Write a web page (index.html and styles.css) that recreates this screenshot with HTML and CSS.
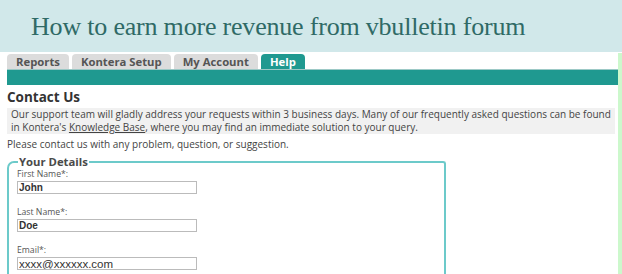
FILE: index.html
```html
<!DOCTYPE html>
<html lang="en">
<head>
    <meta charset="UTF-8">
    <title>How to earn more revenue from vbulletin forum</title>
    <link rel="stylesheet" href="styles.css">
</head>
<body>
    <div class="banner">
        <h1>How to earn more revenue from vbulletin forum</h1>
    </div>
    <div class="page">
        <div class="content">
            <div class="tabs">
                <span class="tab">Reports</span>
                <span class="tab">Kontera Setup</span>
                <span class="tab">My Account</span>
                <span class="tab active">Help</span>
            </div>
            <div class="tab-bar"></div>

            <h2>Contact Us</h2>
            <div class="notice">
                Our support team will gladly address your requests within 3 business days. Many of our frequently asked questions can be found<br>
                in Kontera's <a href="#">Knowledge Base</a>, where you may find an immediate solution to your query.
            </div>
            <p class="intro">Please contact us with any problem, question, or suggestion.</p>

            <fieldset class="details">
                <legend>Your Details</legend>
                <label>First Name*:</label>
                <input type="text" class="bold" value="John">
                <label>Last Name*:</label>
                <input type="text" class="bold" value="Doe">
                <label>Email*:</label>
                <input type="text" value="xxxx@xxxxxx.com">
            </fieldset>
        </div>
        <div class="side"></div>
    </div>
</body>
</html>
```

FILE: styles.css
```css
body {
    margin: 0;
    background-color: #fff;
    font-family: "Open Sans", Arial, sans-serif;
    color: #444;
    overflow: hidden;
}

.banner {
    height: 52px;
    background-color: #d1e8ea;
    margin-bottom: 1px;
}

h1 {
    margin: 0;
    padding: 12px 0 0 31px;
    font-family: "Liberation Serif", "Times New Roman", serif;
    font-weight: normal;
    font-size: 26px;
    line-height: 30px;
    letter-spacing: -0.2px;
    color: #2f6a66;
}

.page {
    display: flex;
    height: 221px;
}

.content {
    flex: 1;
    padding: 1px 0 0 7px;
}

.side {
    width: 10px;
    background-color: #ccf8cc;
}

/* Tabs */
.tabs {
    display: flex;
    gap: 3px;
    height: 15px;
}

.tab {
    padding: 0 9px;
    background-color: #dcdcdc;
    border-radius: 4px 4px 0 0;
    font-size: 11.3px;
    font-weight: bold;
    line-height: 16px;
    color: #555;
}

.tab.active {
    background-color: #1f9990;
    color: #fff;
}

.tab-bar {
    height: 15px;
    background-color: #1f9990;
    border-top: 1px solid #9cc9c6;
}

h2 {
    margin: 5px 0 4px 0;
    font-size: 13.5px;
    line-height: 14px;
    color: #333;
}

.notice {
    margin-right: 3px;
    padding: 0 4px;
    background-color: #f1f1f1;
    font-size: 10px;
    line-height: 13px;
    white-space: nowrap;
}

.notice a {
    color: #444;
}

.intro {
    margin: 4px 0 6px 0;
    font-size: 10px;
    line-height: 12px;
}

.details {
    display: flex;
    flex-direction: column;
    align-items: flex-start;
    box-sizing: border-box;
    width: 439px;
    margin: 0;
    padding: 0 8px;
    border: 2px solid #6ccaca;
    border-bottom: none;
    border-radius: 7px 3px 0 0;
}

.details legend {
    margin-left: 1px;
    padding: 0 1px;
    font-size: 11.3px;
    font-weight: bold;
    line-height: 12px;
    color: #4a4a4a;
}

.details label {
    margin-bottom: 1px;
    font-size: 8.7px;
    line-height: 12px;
    color: #555;
}

.details input {
    box-sizing: border-box;
    width: 180px;
    height: 13px;
    margin: 0 0 12px 0;
    padding: 0 1px;
    border: 1px solid #bbb;
    font-family: "Liberation Sans", Arial, sans-serif;
    font-size: 11.5px;
    color: #333;
}

.details input.bold {
    font-size: 10px;
    font-weight: bold;
}
```
